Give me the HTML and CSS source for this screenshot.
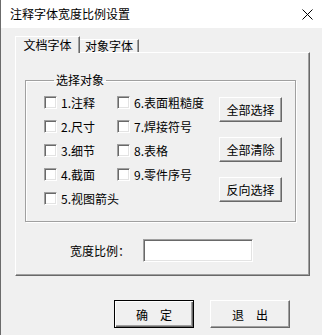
FILE: index.html
```html
<!DOCTYPE html>
<html lang="zh-CN">
<head>
  <meta charset="UTF-8">
  <title>注释字体宽度比例设置</title>
  <link rel="stylesheet" href="styles.css">
</head>
<body>

  <div class="dialog">
    <div class="titlebar">
      <span class="title">注释字体宽度比例设置</span>
      <svg class="close" width="11" height="11" viewBox="0 0 11 11">
        <path d="M0.5 0.5L10.5 10.5M10.5 0.5L0.5 10.5" stroke="#000" stroke-width="1" fill="none"/>
      </svg>
    </div>

    <div class="content">
      <!-- tabs -->
      <div class="tabs">
        <div class="tab active">文档字体</div>
        <div class="tab">对象字体</div>
      </div>

      <div class="panel">
        <fieldset class="group">
          <legend>选择对象</legend>
          <div class="group-body">
            <div class="checks">
              <label class="check"><span class="box"></span>1.注释</label>
              <label class="check"><span class="box"></span>6.表面粗糙度</label>
              <label class="check"><span class="box"></span>2.尺寸</label>
              <label class="check"><span class="box"></span>7.焊接符号</label>
              <label class="check"><span class="box"></span>3.细节</label>
              <label class="check"><span class="box"></span>8.表格</label>
              <label class="check"><span class="box"></span>4.截面</label>
              <label class="check"><span class="box"></span>9.零件序号</label>
              <label class="check"><span class="box"></span>5.视图箭头</label>
            </div>
            <div class="actions">
              <button class="btn">全部选择</button>
              <button class="btn">全部清除</button>
              <button class="btn">反向选择</button>
            </div>
          </div>
        </fieldset>

        <div class="ratio">
          <span class="ratio-label">宽度比例：</span>
          <input class="field">
        </div>
      </div>

      <!-- bottom buttons -->
      <div class="footer">
        <button class="btn big default">确&emsp;定</button>
        <button class="btn big">退&emsp;出</button>
      </div>
    </div>
  </div>

</body>
</html>
```

FILE: styles.css
```css
body {
  margin: 0;
  font-family: "Noto Sans CJK SC", "Liberation Sans", sans-serif;
  font-size: 12px;
  color: #000;
  background: #f0f0f0;
}
.dialog {
  width: 322px;
  height: 335px;
  box-sizing: border-box;
  border-left: 1px solid #6b6b6b;
  background: #f0f0f0;
  overflow: hidden;
}
.titlebar {
  height: 28px;
  background: #fff;
  display: flex;
  align-items: center;
  justify-content: space-between;
  padding: 0 9px 0 9px;
}
.title {
  line-height: 14px;
}
.close {
  display: block;
}
.content {
  padding: 8px 0 0 14px;
}
.tabs {
  display: flex;
  align-items: flex-end;
  margin-bottom: -1px;
  position: relative;
  z-index: 1;
}
.tab {
  box-sizing: border-box;
  width: 59px;
  height: 13px;
  line-height: 12px;
  text-align: center;
  margin-bottom: 1px;
  border-top: 1px solid #fff;
  border-right: 1px solid #696969;
  box-shadow: inset -1px 0 #a0a0a0;
}
.tab.active {
  width: 65px;
  height: 17px;
  line-height: 16px;
  margin-bottom: 0;
  border-left: 1px solid #fff;
  background: #f0f0f0;
}
.panel {
  box-sizing: border-box;
  width: 295px;
  height: 224px;
  border-top: 1px solid #fff;
  border-left: 1px solid #fff;
  border-right: 1px solid #696969;
  border-bottom: 1px solid #696969;
  box-shadow: inset -1px -1px #a0a0a0;
}
.group {
  box-sizing: border-box;
  width: 271px;
  margin: 20px 0 0 9px;
  padding: 3px 13px 11px 18px;
  border: 1px solid #a0a0a0;
  box-shadow: inset 1px 1px #fff, 1px 1px #fff;
}
.group legend {
  margin-left: 10px;
  padding: 0 2px;
  line-height: 14px;
}
.group-body {
  display: flex;
  justify-content: space-between;
}
.checks {
  display: grid;
  grid-template-columns: 73px auto;
  grid-auto-rows: 24px;
}
.check {
  display: flex;
  align-items: center;
  gap: 4px;
  white-space: nowrap;
}
.box {
  flex: none;
  width: 13px;
  height: 13px;
  box-sizing: border-box;
  background: #fff;
  border: 1px solid;
  border-color: #a0a0a0 #fff #fff #a0a0a0;
  box-shadow: inset 1px 1px #696969, inset -1px -1px #e3e3e3;
}
.actions {
  display: flex;
  flex-direction: column;
  gap: 15px;
  margin-top: 7px;
}
.btn {
  box-sizing: border-box;
  width: 63px;
  height: 25px;
  padding: 0;
  font: inherit;
  color: #000;
  background: #f0f0f0;
  border: 1px solid;
  border-color: #fff #696969 #696969 #fff;
  box-shadow: inset -1px -1px #a0a0a0;
}
.ratio {
  display: flex;
  align-items: center;
  margin-top: 17px;
  padding-left: 54px;
}
.ratio-label {
  margin-right: 13px;
}
.field {
  box-sizing: border-box;
  width: 110px;
  height: 23px;
  padding: 0;
  background: #fff;
  border: 1px solid;
  border-color: #a0a0a0 #fff #fff #a0a0a0;
  box-shadow: inset 1px 1px #696969, inset -1px -1px #e3e3e3;
}
.footer {
  display: flex;
  gap: 16px;
  margin-top: 24px;
  padding-left: 99px;
}
.btn.big {
  width: 80px;
  height: 28px;
}
.btn.default {
  border: 1px solid #000;
  box-shadow: inset 1px 1px #fff, inset -1px -1px #696969, inset -2px -2px #a0a0a0;
}
```
